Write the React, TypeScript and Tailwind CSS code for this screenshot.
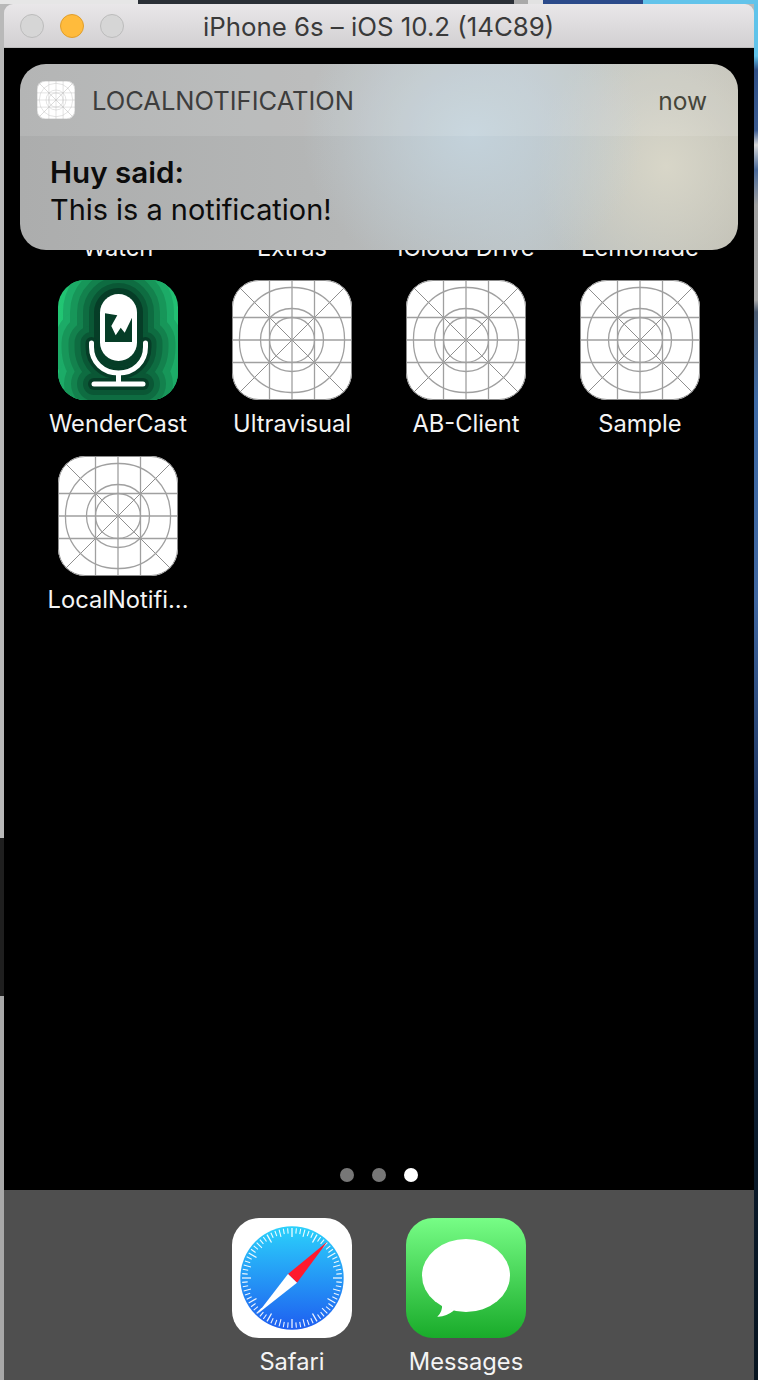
import React from "react";

function GridIcon({ size = 120, line = "#a0a0a0", radius = "rounded-[27px]" }: { size?: number; line?: string; radius?: string }) {
  return (
    <div className={`shrink-0 overflow-hidden bg-white ${radius}`} style={{ width: size, height: size }}>
      <svg viewBox="0 0 120 120" width={size} height={size} fill="none" stroke={line} strokeWidth="1.3" className="block">
        <path d="M7 7L113 113M113 7L7 113" strokeWidth="1" stroke="#8f8f8f" />
        <path d="M37.5 0V120M60 0V120M82.5 0V120M0 37.5H120M0 60H120M0 82.5H120" strokeWidth="1.3" />
        <rect x="7.5" y="7.5" width="105" height="105" rx="51" />
        <circle cx="60" cy="60" r="31.5" />
        <circle cx="60" cy="60" r="22.5" />
        <rect x="0.5" y="0.5" width="119" height="119" rx="26.5" stroke="#8c8c8c" strokeWidth="1" />
      </svg>
    </div>
  );
}

const ARC = "M33.5 63V67C33.5 82 45 93 60.5 93C76 93 87.5 82 87.5 67V63";

function MicShape({ w, color }: { w: number; color: string }) {
  return (
    <g fill="none" stroke={color} strokeWidth={w} strokeLinecap="round" strokeLinejoin="round">
      <rect x="42" y="14" width="37" height="67" rx="18.5" fill={color} />
      <path d={ARC} />
      <path d="M60.5 93V104" />
      <path d="M36 104H85" />
    </g>
  );
}

function WenderIcon() {
  const layers: [number, string][] = [
    [74, "#1cab67"],
    [60, "#179659"],
    [46, "#13814d"],
    [34, "#0e6c41"],
    [22, "#0a5735"],
    [12, "#063d27"],
  ];
  return (
    <div className="h-[120px] w-[120px] shrink-0 overflow-hidden rounded-[27px]">
      <svg viewBox="0 0 120 120" width="120" height="120" className="block">
        <defs>
          <linearGradient id="wg" x1="0" x2="1" y1="0" y2="0">
            <stop offset="0" stopColor="#22c774" />
            <stop offset="0.5" stopColor="#18a561" />
            <stop offset="1" stopColor="#22c173" />
          </linearGradient>
        </defs>
        <rect width="120" height="120" fill="url(#wg)" />
        {layers.map(([w, c]) => (
          <MicShape key={w} w={w} color={c} />
        ))}
        <rect x="42" y="14" width="37" height="67" rx="18.5" fill="#fff" />
        <path d="M47 33.3L59.3 35.3L53.3 46L57.7 55.3L62.7 47.7L66.7 52.7L74 37.7V62H47Z" fill="#063d27" />
        <path d={ARC} fill="none" stroke="#fff" strokeWidth="5" strokeLinecap="round" />
        <path d="M60.5 93V103" stroke="#fff" strokeWidth="5" />
        <path d="M36 104H85" stroke="#fff" strokeWidth="5" strokeLinecap="round" />
      </svg>
    </div>
  );
}

function SafariIcon() {
  const ticks = Array.from({ length: 72 }, (_, i) => i * 5);
  return (
    <div className="h-[120px] w-[120px] shrink-0 overflow-hidden rounded-[27px] bg-white">
      <svg viewBox="0 0 120 120" width="120" height="120" className="block">
        <defs>
          <linearGradient id="sg" x1="0" x2="0" y1="0" y2="1">
            <stop offset="0" stopColor="#2bd1fb" />
            <stop offset="1" stopColor="#1e5ef0" />
          </linearGradient>
        </defs>
        <circle cx="60" cy="60" r="51.7" fill="url(#sg)" />
        {ticks.map((a) => {
          const long = a % 30 === 0;
          const mid = a % 15 === 0;
          const r = (a * Math.PI) / 180;
          const r1 = 50;
          const r2 = long ? 41 : mid ? 42.5 : 44.5;
          return (
            <line
              key={a}
              x1={60 + r1 * Math.sin(r)}
              y1={60 - r1 * Math.cos(r)}
              x2={60 + r2 * Math.sin(r)}
              y2={60 - r2 * Math.cos(r)}
              stroke="#fff"
              strokeWidth={long ? 1.3 : 1.1}
              opacity="0.92"
            />
          );
        })}
        <path d="M95.3 23.7L56 56L65 64.8Z" fill="#ff1a2d" />
        <path d="M25 96.3L56 56L65 64.8Z" fill="#fff" />
      </svg>
    </div>
  );
}

function MessagesIcon() {
  return (
    <div className="h-[120px] w-[120px] shrink-0 overflow-hidden rounded-[27px]">
      <svg viewBox="0 0 120 120" width="120" height="120" className="block">
        <defs>
          <linearGradient id="mg" x1="0" x2="0" y1="0" y2="1">
            <stop offset="0" stopColor="#77fd86" />
            <stop offset="1" stopColor="#19ab2a" />
          </linearGradient>
        </defs>
        <rect width="120" height="120" fill="url(#mg)" />
        <ellipse cx="60" cy="57.5" rx="44" ry="36.5" fill="#fff" />
        <path d="M36 86C36.5 91 35 95.5 31.3 98.7C37 99 43 96.5 48 92.5Z" fill="#fff" />
      </svg>
    </div>
  );
}

function AppCell({ icon, label }: { icon?: React.ReactNode; label: string }) {
  return (
    <div className="flex w-[120px] flex-col items-center">
      {icon ?? <div className="h-[120px] w-[120px] shrink-0" />}
      <div className="mt-[10px] h-[28px] whitespace-nowrap text-[23.7px] leading-[28px] text-[#f4f4f4]">{label}</div>
    </div>
  );
}

export default function App() {
  return (
    <div className="flex h-[1380px] w-[758px] flex-col overflow-hidden bg-[#b8b8b8] font-['Inter','Liberation_Sans',sans-serif]">
      <div className="flex h-[4px] w-[758px] shrink-0">
        <div className="w-[138px] bg-[#e6e6e6]" />
        <div className="w-[376px] bg-[#2a2f36]" />
        <div className="w-[14px] bg-[#a9a9a9]" />
        <div className="w-[15px] bg-[#e2e2e2]" />
        <div className="w-[100px] bg-[#2b4a8a]" />
        <div className="flex-1 bg-[#62c3ea]" />
      </div>
      <div className="flex h-[1376px]">
        <div className="flex w-[4px] shrink-0 flex-col">
          <div className="h-[834px] bg-[#b9b9b9]" />
          <div className="h-[158px] bg-[#1f1f1f]" />
          <div className="flex-1 bg-[#a8a8a8]" />
        </div>
        <div className="flex w-[750px] flex-col">
          <div className="flex h-[44px] shrink-0 items-center rounded-t-[9px] border-b border-[#bdbcbd] bg-[linear-gradient(#e9e7e9,#d2d0d2)] pl-[16px]">
            <div className="flex gap-[16px]">
              <div className="h-[24px] w-[24px] rounded-full border border-[#bcbcbc] bg-[#d6d6d6]" />
              <div className="h-[24px] w-[24px] rounded-full border border-[#e09e2c] bg-[#ffbb3c]" />
              <div className="h-[24px] w-[24px] rounded-full border border-[#bcbcbc] bg-[#d6d6d6]" />
            </div>
            <div className="ml-[79px] mt-[2px] whitespace-nowrap text-[25.8px] leading-[30px] text-[#3a3a3a]">iPhone 6s – iOS 10.2 (14C89)</div>
          </div>
          <div className="relative flex flex-1 flex-col bg-black">
            <div className="grid flex-1 grid-cols-[repeat(4,120px)] content-start gap-x-[54px] gap-y-[18px] pl-[54px] pt-[56px]">
              <AppCell label="Watch" />
              <AppCell label="Extras" />
              <AppCell label="iCloud Drive" />
              <AppCell label="Lemonade" />
              <AppCell icon={<WenderIcon />} label="WenderCast" />
              <AppCell icon={<GridIcon />} label="Ultravisual" />
              <AppCell icon={<GridIcon />} label="AB-Client" />
              <AppCell icon={<GridIcon />} label="Sample" />
              <AppCell icon={<GridIcon />} label="LocalNotifi..." />
            </div>
            <div className="mb-[8px] flex justify-center gap-[18px]">
              <div className="h-[14px] w-[14px] rounded-full bg-[#777777]" />
              <div className="h-[14px] w-[14px] rounded-full bg-[#777777]" />
              <div className="h-[14px] w-[14px] rounded-full bg-white" />
            </div>
            <div className="flex h-[190px] shrink-0 justify-center gap-[54px] bg-[#4f4f4f] pt-[28px]">
              <AppCell icon={<SafariIcon />} label="Safari" />
              <AppCell icon={<MessagesIcon />} label="Messages" />
            </div>
            <div className="absolute left-[16px] top-[16px] flex h-[186px] w-[718px] flex-col overflow-hidden rounded-[26px] bg-[radial-gradient(ellipse_170px_150px_at_63%_38%,#c3d2db,transparent),radial-gradient(ellipse_130px_140px_at_90%_55%,#d8d6c8,transparent),linear-gradient(90deg,#acadad,#b5b7b7_45%,#bcc3c5_70%,#bfbeb4)]">
              <div className="flex h-[72px] shrink-0 items-center bg-white/10 pl-[17px] pr-[31px]">
                <GridIcon size={38} line="#bdbdbd" radius="rounded-[8px]" />
                <div className="ml-[17px] mt-[2px] flex-1 text-[25.5px] leading-[30px] text-[#3d3d3d]">LOCALNOTIFICATION</div>
                <div className="mt-[2px] text-[24.5px] leading-[30px] text-[#45453a]">now</div>
              </div>
              <div className="flex flex-col pl-[30px] pt-[18px] text-[#0c0c0c]">
                <div className="text-[29.6px] font-semibold leading-[36px]">Huy said:</div>
                <div className="mt-[2px] text-[28.9px] leading-[36px]">This is a notification!</div>
              </div>
            </div>
          </div>
        </div>
        <div className="w-[4px] shrink-0 bg-[linear-gradient(#5fc3ea_0,#5fc3ea_52px,#2e4f86_66px,#3a5a90_126px,#d8d8d8_141px,#4a6a9a_166px,#a0a0a0_201px,#a8a8a8_296px,#4a5a70_308px,#3e6aa5_396px,#3f66a0_596px,#1e3560_796px,#12243f_996px,#0a1a2a_1146px,#081520_1376px)]" />
      </div>
    </div>
  );
}
